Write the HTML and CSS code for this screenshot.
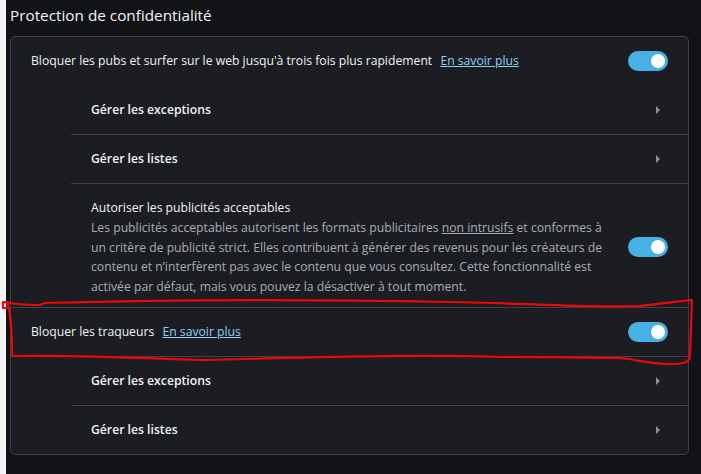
FILE: index.html
```html
<!DOCTYPE html>
<html lang="fr">
<head>
    <meta charset="UTF-8">
    <title>Protection de confidentialité</title>
    <link rel="stylesheet" href="styles.css">
</head>
<body>
    <div class="page">
        <div class="section-title">Protection de confidentialité</div>

        <div class="card">
            <div class="row">
                <div class="label">Bloquer les pubs et surfer sur le web jusqu'à trois fois plus rapidement <a class="more" href="#">En savoir plus</a></div>
                <span class="toggle"></span>
            </div>
            <div class="row sub no-line">
                <div class="label strong">Gérer les exceptions</div>
                <span class="arrow"></span>
            </div>
            <div class="row sub">
                <div class="label strong">Gérer les listes</div>
                <span class="arrow"></span>
            </div>
            <div class="row sub tall">
                <div class="text">
                    <div class="label">Autoriser les publicités acceptables</div>
                    <div class="desc">Les publicités acceptables autorisent les formats publicitaires <span class="underline">non intrusifs</span> et conformes à un critère de publicité strict. Elles contribuent à générer des revenus pour les créateurs de contenu et n’interfèrent pas avec le contenu que vous consultez. Cette fonctionnalité est activée par défaut, mais vous pouvez la désactiver à tout moment.</div>
                </div>
                <span class="toggle"></span>
            </div>
            <div class="row">
                <div class="label">Bloquer les traqueurs <a class="more" href="#">En savoir plus</a></div>
                <span class="toggle"></span>
            </div>
            <div class="row sub">
                <div class="label strong">Gérer les exceptions</div>
                <span class="arrow"></span>
            </div>
            <div class="row sub">
                <div class="label strong">Gérer les listes</div>
                <span class="arrow"></span>
            </div>
        </div>
    </div>

    <!-- hand-drawn highlight around the trackers row -->
    <svg class="scribble" width="701" height="474" viewBox="0 0 701 474">
        <path d="M3 302 L8 302 L8 308 L3 308 L3 302 Q20 305 40 305 L45 303 C150 300 300 299 450 302 C550 304 590 308 640 306 C660 304 680 301 692 300 L690 355 C690 362 685 364 672 364 C650 364 640 360 620 358 C560 358 520 356 500 357 C400 354 300 358 200 360 C120 357 60 355 12 356 C12 340 11 320 9 308"/>
    </svg>
</body>
</html>
```

FILE: styles.css
```css
body {
    margin: 0;
    background-color: #121316;
    font-family: "Open Sans", "Noto Sans", sans-serif;
    color: #f1f2f4;
}

.page {
    border-left: 6px solid #f4f4f4;
    min-height: 474px;
    box-sizing: border-box;
    padding: 4px 12px 0 4px;
}

.section-title {
    font-size: 15.3px;
    line-height: 22px;
    margin-bottom: 10px;
}

.card {
    background-color: #1b1d22;
    border: 1px solid #3d4149;
    border-radius: 5px;
}

.row {
    display: flex;
    align-items: center;
    justify-content: space-between;
    height: 48px;
    padding: 0 20px;
    border-top: 1px solid #3d4149;
}

.row:first-child {
    border-top: none;
}

.row.sub {
    margin-left: 60px;
}

.row.no-line {
    border-top: none;
    height: 49px;
}

.row.tall {
    height: auto;
    padding-top: 14px;
    padding-bottom: 11px;
}

.label {
    font-size: 12.2px;
    line-height: 20px;
}

.label.strong {
    font-weight: 600;
}

.more {
    color: #8fd0f5;
    margin-left: 5px;
}

.text {
    width: 516px;
}

.desc {
    font-size: 12.2px;
    line-height: 19.5px;
    color: #a8adb4;
}

.underline {
    text-decoration: underline;
}

.toggle {
    position: relative;
    flex: none;
    width: 40px;
    height: 20px;
    border-radius: 10px;
    background-color: #47b0e5;
}

.toggle::after {
    content: "";
    position: absolute;
    right: 3px;
    top: 3px;
    width: 14px;
    height: 14px;
    border-radius: 50%;
    background-color: #fff;
}

.arrow {
    width: 0;
    height: 0;
    margin-right: 8px;
    border-left: 4px solid #8b9097;
    border-top: 4px solid transparent;
    border-bottom: 4px solid transparent;
}

.scribble {
    position: absolute;
    left: 0;
    top: 0;
    pointer-events: none;
}

.scribble path {
    fill: none;
    stroke: #f0060a;
    stroke-width: 2.2;
    stroke-linejoin: round;
    stroke-linecap: round;
}
```
